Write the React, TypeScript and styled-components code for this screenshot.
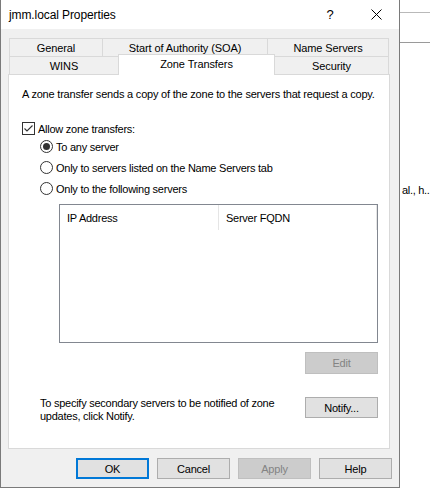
import React from "react";
import styled, { createGlobalStyle, css } from "styled-components";

/** Constants */
const FONT = `"Liberation Sans", Arial, sans-serif`;
const TAB_BORDER = "#d9d9d9";

const GlobalStyle = createGlobalStyle`
  html, body {
    margin: 0;
    padding: 0;
    background: #fff;
  }
  body {
    font-family: ${FONT};
    font-size: 11px;
    color: #000;
  }
`;

const Screen = styled.div`
  display: flex;
  width: 430px;
  height: 500px;
  overflow: hidden;
  background: #fff;
`;

const Window = styled.div`
  box-sizing: border-box;
  flex: 0 0 400px;
  height: 488px;
  border: 1px solid #7a7a7a;
  border-top: none;
  display: flex;
  flex-direction: column;
  background: #f0f0f0;
`;

const TitleBar = styled.div`
  display: flex;
  align-items: center;
  height: 29px;
  background: #fff;
  padding-left: 8px;
`;

const Title = styled.span`
  flex: 1;
  font-size: 12px;
  letter-spacing: -0.1px;
`;

const CaptionButton = styled.div`
  width: 46px;
  height: 29px;
  display: flex;
  align-items: center;
  justify-content: center;
  font-size: 13px;
`;

const Body = styled.div`
  flex: 1;
  display: flex;
  flex-direction: column;
  padding: 9px 7px 0 7px;
`;

const TabRow = styled.div`
  display: flex;
  height: 18px;
  margin-left: 1px;
`;

const Tab = styled.div<{ $w: number; $active?: boolean }>`
  box-sizing: border-box;
  width: ${(p) => p.$w}px;
  height: 19px;
  margin-left: -1px;
  border: 1px solid ${TAB_BORDER};
  border-bottom: none;
  display: flex;
  align-items: center;
  justify-content: center;
  letter-spacing: -0.1px;
  &:first-child {
    margin-left: 0;
  }
  ${(p) =>
    p.$active &&
    css`
      position: relative;
      z-index: 1;
      height: 21px;
      margin-top: -2px;
      background: #fff;
      padding-bottom: 2px;
    `}
`;

const Panel = styled.div`
  box-sizing: border-box;
  width: 382px;
  height: 375px;
  border: 1px solid ${TAB_BORDER};
  background: #fff;
  padding: 12px 11px 0 13px;
  display: flex;
  flex-direction: column;
`;

const Text = styled.div`
  line-height: 15px;
  letter-spacing: -0.2px;
  white-space: nowrap;
`;

const CheckRow = styled.label`
  display: flex;
  align-items: center;
  gap: 3px;
  height: 15px;
  margin-top: 19px;
  letter-spacing: -0.25px;
`;

const Box = styled.span`
  box-sizing: border-box;
  width: 13px;
  height: 13px;
  border: 1px solid #333;
  background: #fff;
  display: flex;
  align-items: center;
  justify-content: center;
`;

const RadioGroup = styled.div`
  display: flex;
  flex-direction: column;
  margin-left: 18px;
`;

const RadioRow = styled.label`
  display: flex;
  align-items: center;
  gap: 3px;
  height: 21px;
  letter-spacing: -0.25px;
`;

const Radio = styled.span<{ $on?: boolean }>`
  box-sizing: border-box;
  width: 13px;
  height: 13px;
  border: 1px solid #333;
  border-radius: 50%;
  display: flex;
  align-items: center;
  justify-content: center;
  &::after {
    content: "";
    width: 7px;
    height: 7px;
    border-radius: 50%;
    background: ${(p) => (p.$on ? "#333" : "transparent")};
  }
`;

const ListBox = styled.div`
  box-sizing: border-box;
  height: 139px;
  margin: 5px 0 0 37px;
  border: 1px solid #828790;
  background: #fff;
`;

const ListHeader = styled.div`
  display: flex;
  height: 25px;
`;

const HeaderCell = styled.div<{ $w: number }>`
  box-sizing: border-box;
  width: ${(p) => p.$w}px;
  padding-left: 7px;
  display: flex;
  align-items: center;
  border-right: 1px solid #e5e5e5;
  letter-spacing: -0.25px;
`;

const Button = styled.button<{ $primary?: boolean; $tall?: boolean }>`
  box-sizing: border-box;
  width: 73px;
  height: ${(p) => (p.$tall ? 22 : 21)}px;
  padding: 0;
  font-family: ${FONT};
  font-size: 11px;
  letter-spacing: -0.2px;
  color: #000;
  background: #e1e1e1;
  border: 1px solid #adadad;
  ${(p) =>
    p.$primary &&
    css`
      border: 2px solid #0078d7;
    `}
  &:disabled {
    background: #cccccc;
    border-color: #bfbfbf;
    color: #838383;
  }
`;

const EditRow = styled.div`
  display: flex;
  justify-content: flex-end;
  margin-top: 9px;
`;

const NotifyRow = styled.div`
  display: flex;
  justify-content: space-between;
  align-items: flex-start;
  margin: 23px 0 0 18px;
`;

const NotifyText = styled.div`
  line-height: 13px;
  letter-spacing: -0.25px;
`;

const Footer = styled.div`
  display: flex;
  justify-content: flex-end;
  gap: 8px;
  margin-top: 9px;
`;

const Behind = styled.div`
  flex: 1;
  min-width: 0;
  display: flex;
  flex-direction: column;
`;

const BehindLine = styled.div<{ $top: number; $color: string }>`
  margin-top: ${(p) => p.$top}px;
  height: 1px;
  background: ${(p) => p.$color};
`;

const BehindText = styled.div`
  margin: 141px 0 0 2px;
  font-size: 11px;
  letter-spacing: -0.3px;
  white-space: nowrap;
`;

const CheckMark = () => (
  <svg width="11" height="11" viewBox="0 0 11 11">
    <path d="M1.5 5.5 L4 8 L9.5 2.5" fill="none" stroke="#333" strokeWidth="1.1" />
  </svg>
);

const CloseIcon = () => (
  <svg width="11" height="11" viewBox="0 0 11 11">
    <path d="M0.5 0.5 L10.5 10.5 M10.5 0.5 L0.5 10.5" stroke="#000" strokeWidth="1" />
  </svg>
);

const App: React.FC = () => {
  return (
    <Screen>
      <GlobalStyle />
      <Window>
        <TitleBar>
          <Title>jmm.local Properties</Title>
          <CaptionButton>?</CaptionButton>
          <CaptionButton>
            <CloseIcon />
          </CaptionButton>
        </TitleBar>
        <Body>
          <TabRow>
            <Tab $w={94}>General</Tab>
            <Tab $w={166}>Start of Authority (SOA)</Tab>
            <Tab $w={122}>Name Servers</Tab>
          </TabRow>
          <TabRow>
            <Tab $w={110}>WINS</Tab>
            <Tab $w={157} $active>
              Zone Transfers
            </Tab>
            <Tab $w={115}>Security</Tab>
          </TabRow>
          <Panel>
            <Text>A zone transfer sends a copy of the zone to the servers that request a copy.</Text>
            <CheckRow>
              <Box>
                <CheckMark />
              </Box>
              Allow zone transfers:
            </CheckRow>
            <RadioGroup>
              <RadioRow>
                <Radio $on />
                To any server
              </RadioRow>
              <RadioRow>
                <Radio />
                Only to servers listed on the Name Servers tab
              </RadioRow>
              <RadioRow>
                <Radio />
                Only to the following servers
              </RadioRow>
            </RadioGroup>
            <ListBox>
              <ListHeader>
                <HeaderCell $w={159}>IP Address</HeaderCell>
                <HeaderCell $w={158}>Server FQDN</HeaderCell>
              </ListHeader>
            </ListBox>
            <EditRow>
              <Button disabled $tall>
                Edit
              </Button>
            </EditRow>
            <NotifyRow>
              <NotifyText>
                To specify secondary servers to be notified of zone
                <br />
                updates, click Notify.
              </NotifyText>
              <Button>Notify...</Button>
            </NotifyRow>
          </Panel>
          <Footer>
            <Button $primary>OK</Button>
            <Button>Cancel</Button>
            <Button disabled>Apply</Button>
            <Button>Help</Button>
          </Footer>
        </Body>
      </Window>
      <Behind>
        <BehindLine $top={12} $color="#b9b9b9" />
        <BehindLine $top={29} $color="#9a9a9a" />
        <BehindText>al., h..</BehindText>
      </Behind>
    </Screen>
  );
};

export default App;
